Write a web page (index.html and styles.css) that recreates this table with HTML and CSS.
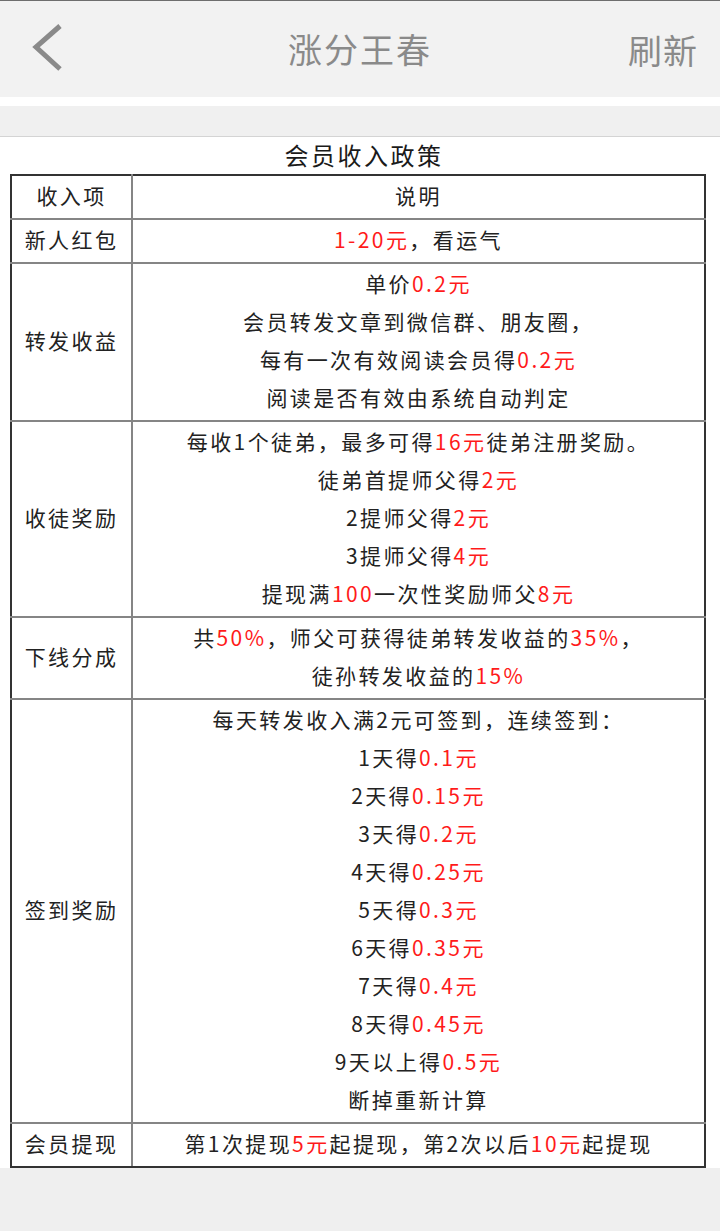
FILE: index.html
```html
<!DOCTYPE html>
<html lang="zh-CN">
<head>
<meta charset="utf-8">
<title>涨分王春</title>
<link rel="stylesheet" href="styles.css">
</head>
<body>
<header class="topbar">
  <span class="back">
    <svg width="40" height="50" viewBox="0 0 40 50"><polyline points="28,3 4,24 28,46" fill="none" stroke="#8a8a8a" stroke-width="5"/></svg>
  </span>
  <h1 class="title">涨分王春</h1>
  <span class="refresh">刷新</span>
</header>
<div class="gap"></div>
<div class="band"></div>
<main class="content">
  <h2 class="caption">会员收入政策</h2>
  <table class="policy">
    <colgroup><col class="c1"><col class="c2"></colgroup>
    <tr><td>收入项</td><td>说明</td></tr>
    <tr><td>新人红包</td><td><em>1-20元</em>，看运气</td></tr>
    <tr><td>转发收益</td><td>单价<em>0.2元</em><br>会员转发文章到微信群、朋友圈，<br>每有一次有效阅读会员得<em>0.2元</em><br>阅读是否有效由系统自动判定</td></tr>
    <tr><td>收徒奖励</td><td>每收1个徒弟，最多可得<em>16元</em>徒弟注册奖励。<br>徒弟首提师父得<em>2元</em><br>2提师父得<em>2元</em><br>3提师父得<em>4元</em><br>提现满<em>100</em>一次性奖励师父<em>8元</em></td></tr>
    <tr><td>下线分成</td><td>共<em>50%</em>，师父可获得徒弟转发收益的<em>35%</em>，<br>徒孙转发收益的<em>15%</em></td></tr>
    <tr><td>签到奖励</td><td>每天转发收入满2元可签到，连续签到：<br>1天得<em>0.1元</em><br>2天得<em>0.15元</em><br>3天得<em>0.2元</em><br>4天得<em>0.25元</em><br>5天得<em>0.3元</em><br>6天得<em>0.35元</em><br>7天得<em>0.4元</em><br>8天得<em>0.45元</em><br>9天以上得<em>0.5元</em><br>断掉重新计算</td></tr>
    <tr><td>会员提现</td><td>第1次提现<em>5元</em>起提现，第2次以后<em>10元</em>起提现</td></tr>
  </table>
</main>
</body>
</html>
```

FILE: styles.css
```css
html, body {
  margin: 0;
  padding: 0;
  background: #efefef;
  font-family: "Noto Sans CJK SC", "Noto Sans", sans-serif;
}
.topbar {
  height: 96px;
  border-top: 1px solid #6e6e6e;
  background: #f2f2f2;
  display: flex;
  align-items: center;
  justify-content: space-between;
  position: relative;
  color: #8a8a8a;
}
.back {
  width: 40px;
  height: 50px;
  margin-left: 32px;
  margin-top: -2px;
  display: flex;
}
.title {
  position: absolute;
  left: 0;
  right: 0;
  text-align: center;
  margin: 0;
  font-size: 34px;
  font-weight: normal;
  letter-spacing: 2px;
  line-height: 96px;
  pointer-events: none;
}
.refresh {
  font-size: 34px;
  letter-spacing: 1px;
  margin-right: 22px;
}
.gap {
  height: 9px;
  background: #ffffff;
}
.band {
  height: 30px;
  background: #f0f0f0;
  border-bottom: 1px solid #d4d4d4;
}
.content {
  background: #ffffff;
  overflow: hidden;
}
.caption {
  margin: 0;
  height: 37px;
  line-height: 36px;
  text-align: center;
  padding-left: 8px;
  font-size: 24px;
  font-weight: normal;
  letter-spacing: 2.5px;
  color: #1a1a1a;
}
.policy {
  width: 696px;
  margin-left: 10px;
  border-collapse: collapse;
  border: 2px solid #333333;
  font-size: 21px;
  letter-spacing: 2.4px;
  color: #222222;
}
.c1 { width: 121px; }
.policy td {
  border: 2px solid #858585;
  padding: 0 0 4px;
  line-height: 38px;
  text-align: center;
  vertical-align: middle;
}
.policy tr:first-child td { border-top-color: #333333; }
.policy tr:last-child td { border-bottom-color: #333333; }
.policy td:first-child { border-left-color: #333333; }
.policy td:last-child { border-right-color: #333333; }
.policy em {
  font-style: normal;
  color: #ff1a1a;
}
```
